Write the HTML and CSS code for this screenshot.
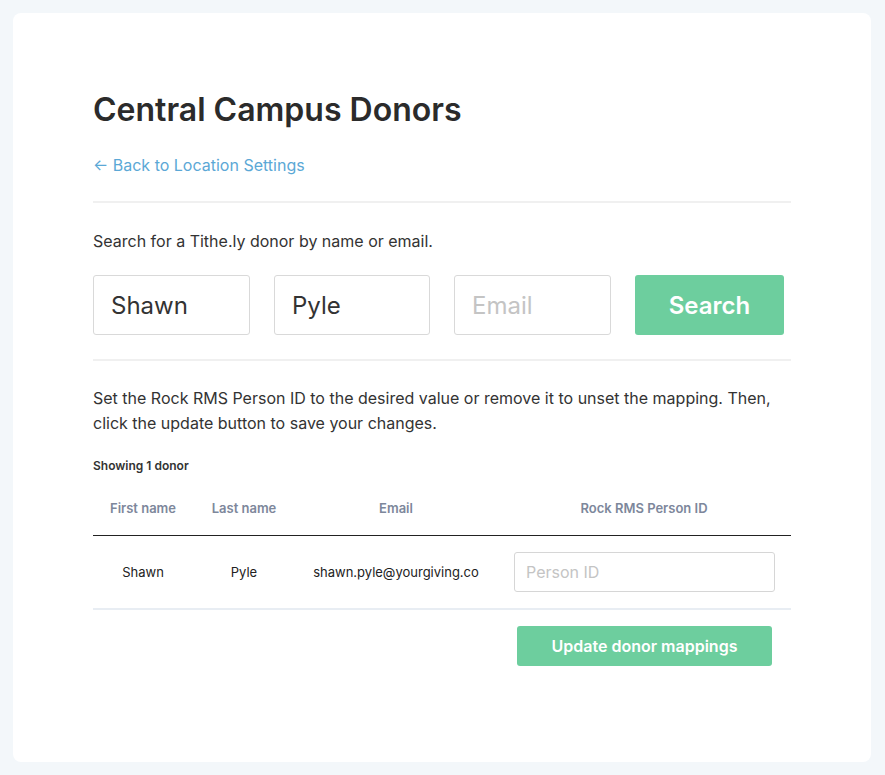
FILE: index.html
```html
<!DOCTYPE html>
<html>
<head>
<meta charset="utf-8">
<link rel="stylesheet" href="styles.css">
</head>
<body>
<div class="card">
  <h1 class="title">Central Campus Donors</h1>
  <a class="back" href="#">← Back to Location Settings</a>
  <hr class="divider first">
  <p class="lead">Search for a Tithe.ly donor by name or email.</p>
  <div class="search-row">
    <input class="field" type="text" value="Shawn">
    <input class="field narrow" type="text" value="Pyle">
    <input class="field" type="text" placeholder="Email">
    <button class="btn btn-search">Search</button>
  </div>
  <hr class="divider second">
  <p class="help">Set the Rock RMS Person ID to the desired value or remove it to unset the mapping. Then, click the update button to save your changes.</p>
  <div class="count">Showing 1 donor</div>
  <table class="donors">
    <thead>
      <tr>
        <th class="c1">First name</th>
        <th class="c2">Last name</th>
        <th class="c3">Email</th>
        <th class="c4">Rock RMS Person ID</th>
      </tr>
    </thead>
    <tbody>
      <tr>
        <td>Shawn</td>
        <td>Pyle</td>
        <td>shawn.pyle@yourgiving.co</td>
        <td><input class="pid" type="text" placeholder="Person ID"></td>
      </tr>
    </tbody>
  </table>
  <div class="actions">
    <button class="btn btn-update">Update donor mappings</button>
  </div>
</div>
</body>
</html>
```
FILE: styles.css
```css
* { box-sizing: border-box; }
html, body { margin: 0; padding: 0; }
body {
  background: #f3f7fa;
  font-family: Inter, "Noto Sans", sans-serif;
  color: #333;
  padding: 13px 14px 13px 13px;
}
.card {
  background: #fff;
  border-radius: 8px;
  height: 749px;
  padding: 79px 80px 0 80px;
}
.title {
  margin: 0;
  font-size: 32px;
  line-height: 36px;
  font-weight: 600;
  color: #2b2b2b;
  letter-spacing: 0;
}
.back {
  display: inline-block;
  margin-top: 27px;
  font-size: 16px;
  line-height: 20px;
  color: #5ba8d6;
  text-decoration: none;
}
.divider {
  border: 0;
  height: 2px;
  background: #f0f0f0;
  margin: 0;
}
.divider.first { margin-top: 26px; }
.lead {
  margin: 28px 0 0;
  font-size: 16px;
  line-height: 20px;
  color: #333;
}
.search-row {
  display: flex;
  gap: 24px;
  margin-top: 24px;
}
.field {
  width: 157px;
  height: 60px;
  border: 1px solid #d9d9d9;
  border-radius: 3px;
  padding: 0 17px;
  font-family: inherit;
  font-size: 24px;
  color: #333;
  outline: none;
}
.field.narrow { width: 156px; }
.field::placeholder { color: #c4c4c4; }
.btn {
  background: #6dce9e;
  color: #fff;
  border: 0;
  border-radius: 3px;
  font-family: inherit;
  font-weight: 600;
  cursor: pointer;
}
.btn-search {
  width: 149px;
  height: 60px;
  font-size: 24px;
}
.divider.second { margin-top: 24px; }
.help {
  margin: 25px 0 0;
  font-size: 16px;
  line-height: 25px;
  color: #333;
}
.count {
  margin-top: 22px;
  font-size: 12px;
  line-height: 16px;
  font-weight: 600;
  color: #333;
}
.donors {
  width: 100%;
  border-collapse: collapse;
  margin-top: 26px;
}
.donors th {
  font-size: 13px;
  font-weight: 600;
  color: #7d879b;
  height: 33px;
  padding: 0 0 19px;
  border-bottom: 1px solid #222;
  text-align: center;
  vertical-align: top;
}
.c1 { width: 100px; }
.c2 { width: 102px; }
.c3 { width: 202px; }
.c4 { width: 294px; }
.donors td {
  height: 73px;
  font-size: 13px;
  color: #222;
  text-align: center;
  border-bottom: 2px solid #e8edf3;
  padding: 0;
}
.pid {
  width: 261px;
  height: 40px;
  margin-left: 1px;
  border: 1px solid #d6d6d6;
  border-radius: 3px;
  padding: 0 11px;
  font-family: inherit;
  font-size: 16px;
  outline: none;
}
.pid::placeholder { color: #c4c4c4; }
.actions {
  display: flex;
  justify-content: flex-end;
  padding-right: 19px;
  margin-top: 16px;
}
.btn-update {
  width: 255px;
  height: 40px;
  font-size: 16px;
}
```
